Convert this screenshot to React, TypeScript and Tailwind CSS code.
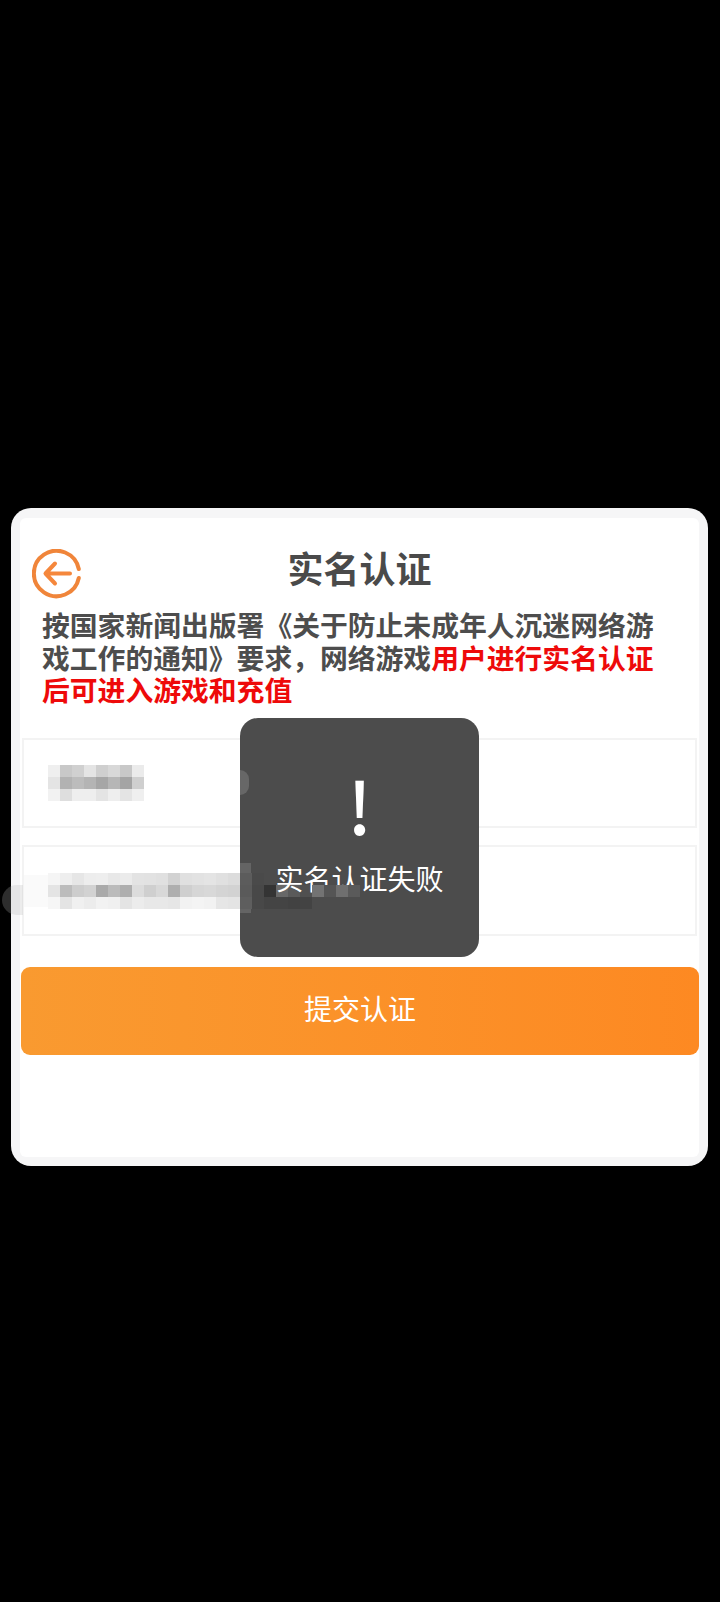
const font = { fontFamily: '"Noto Sans CJK SC", "Noto Sans", sans-serif' };

const BackIcon = () => (
  <svg width="50" height="50" viewBox="0 0 50 50" fill="none" className="shrink-0">
    <path d="M46.8 20A22.7 22.7 0 1 0 46.8 29" stroke="#f0853a" strokeWidth="4" strokeLinecap="round" />
    <path d="M14 24.5H38M23 14.5L13.5 24.5L23 34.5" stroke="#f5873c" strokeWidth="4" strokeLinecap="round" strokeLinejoin="round" />
  </svg>
);

// pixelated cover the screenshot has over the typed values
const Mosaic = ({ cells }: { cells: (string | null)[][] }) => (
  <div className="flex flex-col">
    {cells.map((row, i) => (
      <div key={i} className="flex h-3">
        {row.map((c, j) => (
          <div key={j} className="h-3 w-3 shrink-0" style={{ backgroundColor: c ?? "transparent" }} />
        ))}
      </div>
    ))}
  </div>
);

const nameCells = [
  ["#efefef", "#c8c8c8", "#d0d0d0", "#e4e4e4", "#cfcfcf", "#d8d8d8", "#c8c8c8", "#ebebeb"],
  ["#e4e4e4", "#b2b2b2", "#bcbcbc", "#b4b4b4", "#a6a6a6", "#b6b6b6", "#a4a4a4", "#cfcfcf"],
  ["#f2f2f2", "#dedede", "#eeeeee", "#eeeeee", "#e4e4e4", "#eeeeee", "#e4e4e4", "#efefef"],
];

// the part that the toast text sits on top of
const idCells = [
  ["#f5f5f5", "#eeeeee", "#e6e6e6", "#ededed", "#eeeeee", "#e8e8e8", "#ebebeb", "#e3e3e3", "#e2e2e2", "#e0e0e0", "#d2d2d2", "#e0e0e0", "#e2e2e2", "#e4e4e4", "#e0e0e0", "#dcdcdc", "#5c5c5c", "#4a4a4a", null, null, null, null],
  ["#e4e4e4", "#bcbcbc", "#cdcdcd", "#d2d2d2", "#aaaaaa", "#bbbbbb", "#aeaeae", "#dcdcdc", "#cfcfcf", "#d8d8d8", "#aeaeae", "#cfcfcf", "#d6d6d6", "#d8d8d8", "#d4d4d4", "#d2d2d2", "#5a5a5a", "#484848", "#343434", "#686868", "#5a5a5a", "#505050"],
  ["#f6f6f6", "#e4e4e4", "#f0f0f0", "#ececec", "#f2f2f2", "#f0f0f0", "#e4e4e4", "#ececec", "#e8e8e8", "#e8e8e8", "#e6e6e6", "#f2f2f2", "#f4f4f4", "#f2f2f2", "#e6e6e6", "#e4e4e4", "#5e5e5e", "#484848", "#444444", "#444444", "#424242", "#434343"],
];

// these cut across the lower half of the toast text
const idCover = [["#737373", "#555555", "#6f6f6f", "#5a5a5a"]];

export default function App() {
  return (
    <div className="h-[1602px] w-[720px] overflow-hidden bg-black pt-[508px] pl-[11px]" style={font}>
      <div className="relative h-[658px] w-[697px] rounded-[20px] bg-[#f6f6f7] px-[9px] pt-[10px] pb-[9px]">
        <div className="h-full rounded-[6px] bg-white">
          {/* Header */}
          <div className="flex h-[70px] items-start pl-[12px]">
            <div className="mt-[31px]">
              <BackIcon />
            </div>
            <h1 className="flex-1 pt-[27px] pr-[62px] text-center text-[36px] leading-[44px] font-bold text-[#4a4a4a]">实名认证</h1>
          </div>

          {/* Notice */}
          <p className="mt-[20px] px-[22px] text-[27.8px] leading-[32.5px] font-bold text-[#4d4d4d]">
            按国家新闻出版署《关于防止未成年人沉迷网络游戏工作的通知》要求，网络游戏
            <span className="text-[#ee0a0a]">用户进行实名认证后可进入游戏和充值</span>
          </p>

          {/* Fields */}
          <div className="mt-[32.5px] flex flex-col gap-[17px] px-[2px]">
            <div className="flex h-[90px] items-center border-2 border-[#f3f3f3] bg-white pl-[24px]">
              <Mosaic cells={nameCells} />
            </div>
            <div className="flex h-[91px] items-center border-2 border-[#f3f3f3] bg-white">
              <div className="h-[32px] w-[24px] bg-[#fafafa]" />
              <div className="relative z-20">
                <Mosaic cells={idCells} />
              </div>
              <div className="relative z-40">
                <Mosaic cells={idCover} />
              </div>
            </div>
          </div>

          <button className="mt-[31px] ml-[1px] flex h-[88px] w-[678px] items-center justify-center rounded-[9px] bg-gradient-to-r from-[#f99a30] to-[#fd8922] pb-[7px] text-[28px] text-white">
            提交认证
          </button>
        </div>

        {/* smudge left by the cover, runs off the card edge */}
        <div className="absolute top-[377px] left-[-9px] h-[30px] w-[21px] rounded-l-full bg-[#b4b4b4]/25" />

        {/* Toast */}
        <div className="absolute top-[210px] left-[229px] flex h-[239px] w-[239px] flex-col items-center rounded-[18px] bg-[#4c4c4c]">
          <div className="absolute top-[52px] left-0 h-[25px] w-[9px] rounded-r-full bg-[#676767]" />
          <div className="absolute top-[145px] left-0 h-[50px] w-[11px] bg-[#646464]" />
          <span className="mt-[46px] text-[72px] leading-[80px] font-medium text-white">!</span>
          <span className="relative z-30 mt-[14px] text-[28px] leading-[40px] text-white">实名认证失败</span>
        </div>
      </div>
    </div>
  );
}
